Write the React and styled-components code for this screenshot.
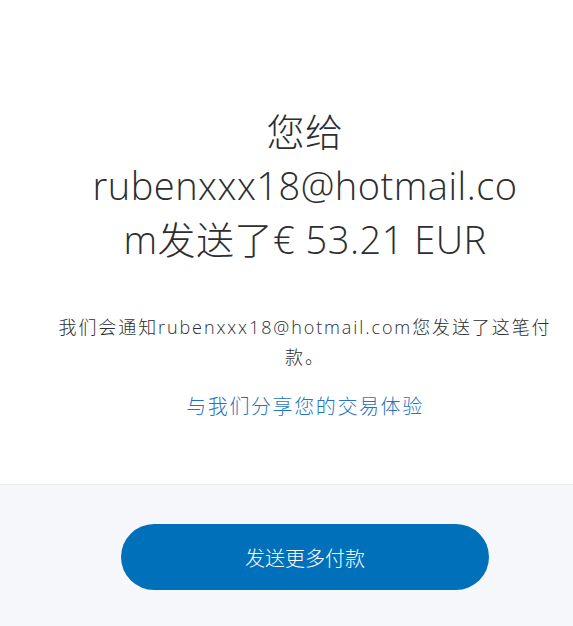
import React from "react";
import styled, { createGlobalStyle } from "styled-components";

const Global = createGlobalStyle`
  html, body { margin: 0; padding: 0; background: #ffffff; }
  body { font-family: "Open Sans", "Noto Sans CJK SC", sans-serif; color: #2c2e2f; }
  #root { min-height: 100vh; display: flex; flex-direction: column; }
`;

const Page = styled.div`
  flex: 1;
  display: flex;
  flex-direction: column;
  min-height: 626px;
`;

const Main = styled.main`
  display: flex;
  flex-direction: column;
  align-items: center;
  padding: 104px 0 0 37px;
  height: 484px;
  box-sizing: border-box;
`;

const Heading = styled.h1`
  margin: 0;
  width: 440px;
  text-align: center;
  font-family: "Open Sans", "Noto Sans CJK SC", sans-serif;
  font-weight: 300;
  font-size: 38px;
  letter-spacing: 0.5px;
  line-height: 54px;
  color: #2c2e2f;
  word-break: normal;
  overflow-wrap: break-word;
`;

const Note = styled.p`
  margin: 46px 0 0;
  width: 520px;
  text-align: center;
  font-family: "Open Sans", "Noto Sans CJK SC", sans-serif;
  font-weight: 300;
  font-size: 18px;
  letter-spacing: 1.9px;
  line-height: 30px;
  color: #2c2e2f;
  word-break: normal;
  overflow-wrap: break-word;
`;

const Link = styled.a`
  margin-top: 19px;
  font-family: "Noto Sans CJK SC", sans-serif;
  font-weight: 300;
  font-size: 20px;
  letter-spacing: 1.6px;
  line-height: 30px;
  color: #1f76c0;
  text-decoration: none;
`;

const Footer = styled.footer`
  flex: 1;
  background: #f5f7fa;
  border-top: 1px solid #eaeced;
  display: flex;
  justify-content: center;
  padding: 39px 0 0 37px;
`;

const Button = styled.button`
  width: 368px;
  height: 66px;
  border: none;
  border-radius: 33px;
  background: #0070ba;
  color: #ffffff;
  font-family: "Noto Sans CJK SC", sans-serif;
  font-weight: 300;
  font-size: 20px;
  cursor: pointer;
`;

export default function App() {
  return (
    <>
      <Global />
      <Page>
        <Main>
          <Heading>您给rubenxxx18@hotmail.com发送了€ 53.21 EUR</Heading>
          <Note>我们会通知rubenxxx18@hotmail.com您发送了这笔付款。</Note>
          <Link href="#">与我们分享您的交易体验</Link>
        </Main>
        <Footer>
          <Button>发送更多付款</Button>
        </Footer>
      </Page>
    </>
  );
}
